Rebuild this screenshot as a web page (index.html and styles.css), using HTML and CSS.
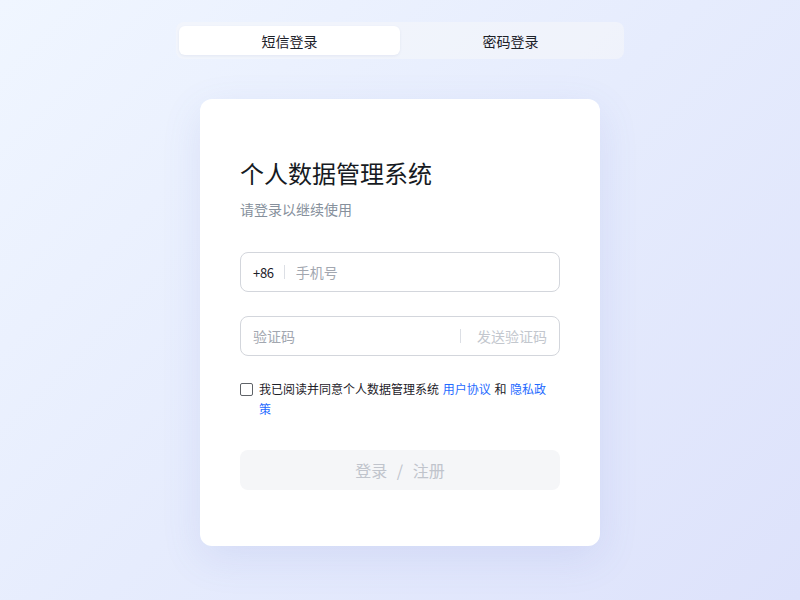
FILE: index.html
```html
<!DOCTYPE html>
<html lang="zh-CN">
<head>
<meta charset="utf-8">
<link rel="stylesheet" href="styles.css">
</head>
<body>
<div class="page">
  <div class="tabs">
    <div class="tab active">短信登录</div>
    <div class="tab">密码登录</div>
  </div>
  <div class="card">
    <h1 class="title">个人数据管理系统</h1>
    <p class="subtitle">请登录以继续使用</p>
    <div class="field">
      <span class="prefix">+86</span>
      <span class="sep"></span>
      <span class="placeholder">手机号</span>
    </div>
    <div class="field field-code">
      <span class="placeholder grow">验证码</span>
      <span class="sep"></span>
      <span class="send">发送验证码</span>
    </div>
    <div class="agree">
      <span class="box"></span>
      <span class="agree-text">我已阅读并同意个人数据管理系统 <a class="link">用户协议</a> 和 <a class="link">隐私政策</a></span>
    </div>
    <div class="btn">登录 <span class="slash">/</span> 注册</div>
  </div>
</div>
</body>
</html>
```

FILE: styles.css
```css
* { box-sizing: border-box; }
html, body { margin: 0; padding: 0; }
body {
  width: 800px;
  height: 600px;
  overflow: hidden;
  font-family: "Noto Sans CJK SC", "Noto Sans", sans-serif;
  background: linear-gradient(135deg, #f0f6ff 0%, #e6ecfd 50%, #dde2fb 100%);
  color: #1d2129;
}
.page {
  display: flex;
  flex-direction: column;
  align-items: center;
  padding-top: 22px;
}
.tabs {
  width: 448px;
  height: 37px;
  padding: 4px 3px;
  display: flex;
  background: rgba(244, 246, 250, 0.65);
  border-radius: 8px;
}
.tab {
  flex: 1;
  display: flex;
  align-items: center;
  justify-content: center;
  font-size: 14px;
  color: #1d2129;
  border-radius: 6px;
}
.tab.active {
  background: #fff;
  box-shadow: 0 1px 3px rgba(60, 80, 140, 0.08);
}
.card {
  margin-top: 40px;
  width: 400px;
  height: 447px;
  background: #fff;
  border-radius: 12px;
  padding: 55px 40px 0;
  box-shadow: 0 12px 40px rgba(90, 110, 200, 0.12);
}
.title {
  margin: 0;
  font-size: 24px;
  font-weight: 400;
  line-height: 38px;
  color: #161a22;
}
.subtitle {
  margin: 6px 0 0;
  font-size: 14px;
  line-height: 22px;
  color: #86909c;
}
.field {
  margin-top: 32px;
  height: 40px;
  border: 1px solid #d3d6dc;
  border-radius: 8px;
  padding: 0 12px;
  display: flex;
  align-items: center;
  font-size: 14px;
}
.field-code { margin-top: 24px; }
.prefix { color: #1d2129; font-size: 13px; letter-spacing: -0.3px; }
.sep {
  width: 1px;
  height: 14px;
  background: #dcdfe5;
  margin: 0 11px 0 10px;
}
.placeholder { color: #a2a7b0; }
.grow { flex: 1; }
.send { color: #c3c7ce; margin-left: 5px; }
.agree {
  margin-top: 23px;
  display: flex;
  align-items: flex-start;
  font-size: 12px;
  line-height: 20px;
  color: #1d2129;
}
.box {
  flex: none;
  width: 13px;
  height: 13px;
  margin-top: 4px;
  margin-right: 6px;
  border: 1px solid #5f6368;
  border-radius: 2px;
}
.agree-text { flex: 1; padding-right: 4px; }
.link { color: #1f6bff; text-decoration: none; margin: 0 1px; }
.btn {
  margin-top: 31px;
  height: 40px;
  border-radius: 8px;
  background: #f5f6f8;
  display: flex;
  align-items: center;
  justify-content: center;
  font-size: 16px;
  color: #c0c4cc;
  white-space: pre;
}
.slash { margin: 0 6px; }
```
